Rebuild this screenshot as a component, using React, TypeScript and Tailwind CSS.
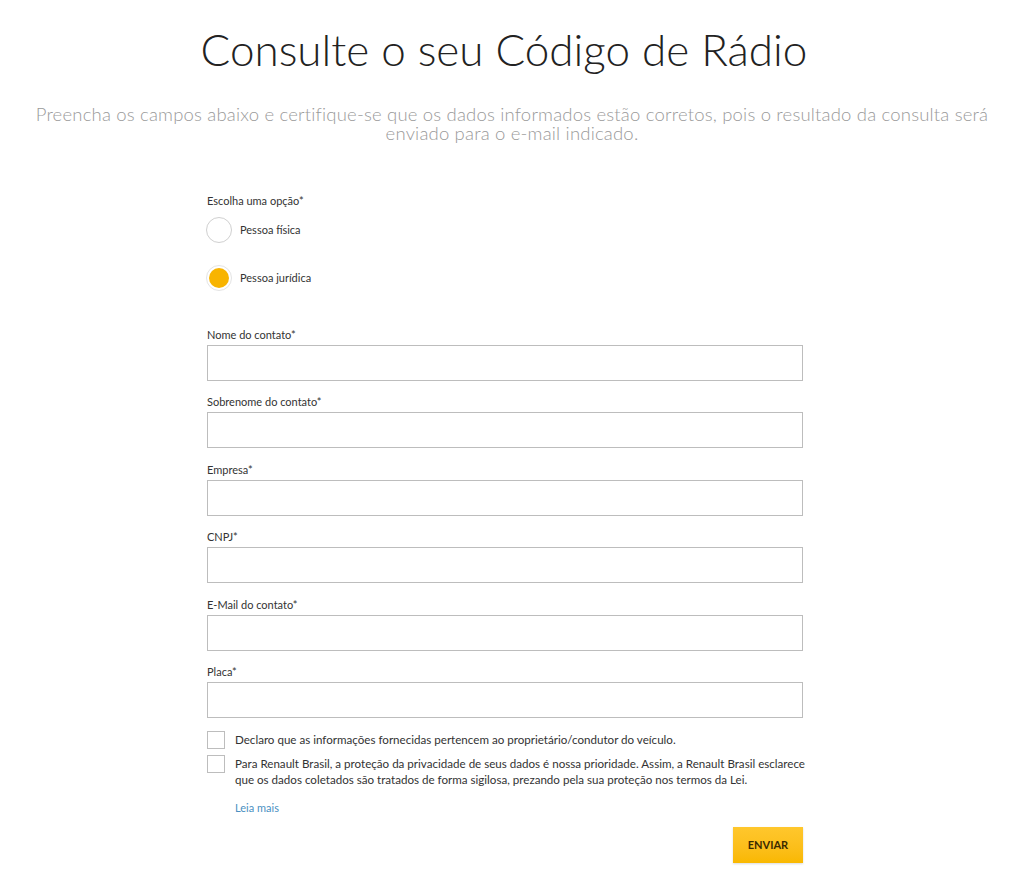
import { useState } from 'react';

const fields = [
  'Nome do contato*',
  'Sobrenome do contato*',
  'Empresa*',
  'CNPJ*',
  'E-Mail do contato*',
  'Placa*',
];

export default function App() {
  const [tipo, setTipo] = useState<'fisica' | 'juridica'>('juridica');
  const [checks, setChecks] = useState([false, false]);

  const toggle = (i: number) =>
    setChecks(prev => prev.map((v, j) => (j === i ? !v : v)));

  return (
    <div className="min-h-screen bg-white font-['Lato',sans-serif] text-[#333]">
      <h1 className="pr-[16px] pt-[21px] text-center text-[44px] font-light leading-[56px] text-[#222]">
        Consulte o seu Código de Rádio
      </h1>
      <p className="mx-auto mt-[28px] max-w-[990px] px-2 text-center text-[18.5px] font-light leading-[19px] tracking-[0.01em] text-[#9a9a9a]">
        Preencha os campos abaixo e certifique-se que os dados informados estão corretos, pois o resultado da consulta será enviado para o e-mail indicado.
      </p>

      <form className="ml-[207px] mt-[51px] w-[596px]" onSubmit={e => e.preventDefault()}>
        <p className="text-[11px] leading-[14px]">Escolha uma opção*</p>
        <div className="-ml-[1px] mt-[9px] flex flex-col gap-[22px]">
          {[
            { id: 'fisica' as const, label: 'Pessoa física' },
            { id: 'juridica' as const, label: 'Pessoa jurídica' },
          ].map(opt => (
            <label key={opt.id} className="flex cursor-pointer items-center gap-[8px]">
              <span
                className={
                  tipo === opt.id
                    ? 'flex h-[26px] w-[26px] items-center justify-center rounded-full border border-[#e4e4e4] bg-white'
                    : 'flex h-[26px] w-[26px] items-center justify-center rounded-full border border-[#d0d0d0] bg-white'
                }
                onClick={() => setTipo(opt.id)}
              >
                {tipo === opt.id && <span className="h-[20px] w-[20px] rounded-full bg-[#f8b400]" />}
              </span>
              <span className="text-[11px]">{opt.label}</span>
            </label>
          ))}
        </div>

        <div className="mt-[37px] flex flex-col gap-[14.4px]">
          {fields.map(f => (
            <div key={f}>
              <label className="block text-[11px] leading-[14px]">{f}</label>
              <input
                type="text"
                className="mt-[3px] block h-[36px] w-full border border-[#bdbdbd] px-2 text-[13px] outline-none focus:border-[#888]"
              />
            </div>
          ))}
        </div>

        <div className="mt-[13px] flex flex-col gap-[6px]">
          {[
            'Declaro que as informações fornecidas pertencem ao proprietário/condutor do veículo.',
            'Para Renault Brasil, a proteção da privacidade de seus dados é nossa prioridade. Assim, a Renault Brasil esclarece que os dados coletados são tratados de forma sigilosa, prezando pela sua proteção nos termos da Lei.',
          ].map((t, i) => (
            <label key={i} className="flex cursor-pointer items-start gap-[10px]">
              <span
                className="flex h-[18px] w-[18px] shrink-0 items-center justify-center border border-[#bdbdbd] bg-white text-[12px] leading-none text-[#333]"
                onClick={() => toggle(i)}
              >
                {checks[i] ? '✓' : ''}
              </span>
              <span className="-mr-[24px] mt-[1px] text-[11.6px] leading-[16px]">{t}</span>
            </label>
          ))}
        </div>

        <a href="#" className="ml-[28px] mt-[13px] block text-[11px] leading-[14px] text-[#4a90c2]">
          Leia mais
        </a>

        <div className="mt-[12px] flex justify-end">
          <button
            type="submit"
            className="h-[36px] w-[70px] bg-gradient-to-b from-[#ffc72c] to-[#f9b800] text-[11px] font-bold text-[#3a2a00] shadow-[0_1px_2px_rgba(0,0,0,0.15)]"
          >
            ENVIAR
          </button>
        </div>
      </form>
    </div>
  );
}
